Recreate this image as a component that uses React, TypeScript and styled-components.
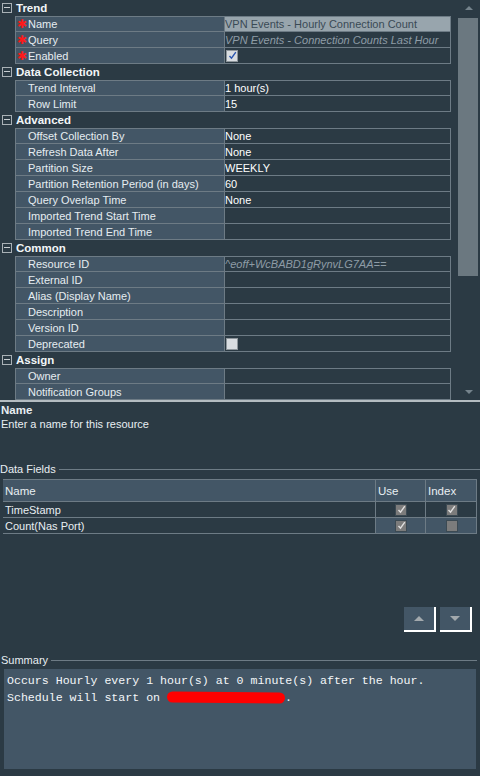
import React from "react";
import styled, { createGlobalStyle } from "styled-components";

const BG = "#2b3a44";
const LIGHT = "#435666";
const LINE = "#6d7b85";

const Global = createGlobalStyle`
  html, body { margin: 0; padding: 0; background: ${BG}; }
  body { font-family: "Liberation Sans", Arial, sans-serif; font-size: 11px; color: #e8eef2; }
  * { box-sizing: border-box; }
`;

const Page = styled.div`
  width: 480px;
  height: 776px;
  display: flex;
  flex-direction: column;
  overflow: hidden;
`;

const GridPanel = styled.div`
  height: 400px;
  display: flex;
  flex-shrink: 0;
  overflow: hidden;
`;

const Grid = styled.div`
  width: 457px;
  display: flex;
  flex-direction: column;
`;

const CategoryRow = styled.div`
  height: 16px;
  display: flex;
  align-items: center;
  font-weight: bold;
  font-size: 11.5px;
  color: #f2f6f8;
`;

const Minus = styled.span`
  width: 10px;
  height: 10px;
  margin: 0 4px 0 2px;
  border: 1px solid #a9b1b6;
  position: relative;
  &::after {
    content: "";
    position: absolute;
    left: 1px;
    right: 1px;
    top: 3px;
    height: 1px;
    background: #c8ced2;
  }
`;

const PropRow = styled.div`
  height: 16px;
  display: grid;
  grid-template-columns: 15px 209px 227px;
`;

const Gutter = styled.div``;

const LabelCell = styled.div<{ $first?: boolean }>`
  background: ${LIGHT};
  border-left: 1px solid ${LINE};
  border-bottom: 1px solid ${LINE};
  border-top: ${(p) => (p.$first ? `1px solid ${LINE}` : "none")};
  display: flex;
  align-items: center;
  padding-left: 1px;
  white-space: nowrap;
  color: #e6edf1;
`;

const Star = styled.span`
  color: #ff1a1a;
  width: 11px;
  font-family: "DejaVu Sans", sans-serif;
  font-size: 12px;
  line-height: 12px;
`;

const LabelText = styled.span<{ $indent?: boolean }>`
  padding-left: ${(p) => (p.$indent ? "11px" : "0")};
`;

const ValueCell = styled.div<{ $first?: boolean; $selected?: boolean; $muted?: boolean }>`
  border-left: 1px solid ${LINE};
  border-right: 1px solid ${LINE};
  border-bottom: 1px solid ${LINE};
  border-top: ${(p) => (p.$first ? `1px solid ${LINE}` : "none")};
  background: ${(p) => (p.$selected ? "#98a5ad" : "transparent")};
  color: ${(p) => (p.$selected ? "#3a4a55" : p.$muted ? "#8e9ca6" : "#ffffff")};
  font-style: ${(p) => (p.$muted ? "italic" : "normal")};
  display: flex;
  align-items: center;
  white-space: nowrap;
  overflow: hidden;
  padding-left: 0;
`;

const CheckBox = styled.span<{ $variant: "light" | "grey" }>`
  width: 12px;
  height: 12px;
  display: inline-flex;
  align-items: center;
  justify-content: center;
  background: ${(p) => (p.$variant === "light" ? "#d9dde1" : "#7c7c7c")};
  border: 1px solid ${(p) => (p.$variant === "light" ? "#8e969c" : "#3c4a53")};
  margin-left: 1px;
`;

const Scrollbar = styled.div`
  width: 23px;
  display: flex;
  flex-direction: column;
  align-items: center;
`;

const ArrowUp = styled.span`
  width: 0;
  height: 0;
  margin-top: 6px;
  border-left: 4px solid transparent;
  border-right: 4px solid transparent;
  border-bottom: 4px solid #75838c;
`;

const ArrowDown = styled.span`
  width: 0;
  height: 0;
  margin-top: auto;
  margin-bottom: 6px;
  border-left: 4px solid transparent;
  border-right: 4px solid transparent;
  border-top: 4px solid #75838c;
`;

const Thumb = styled.div`
  width: 20px;
  height: 258px;
  margin-top: 8px;
  margin-right: 2px;
  align-self: flex-end;
  background: #6b7880;
`;

const Divider = styled.div`
  height: 2px;
  background: #b4bcc1;
  flex-shrink: 0;
`;

const Help = styled.div`
  height: 58px;
  padding: 1px 1px;
  flex-shrink: 0;
`;

const HelpTitle = styled.div`
  font-weight: bold;
  font-size: 11.5px;
  line-height: 14px;
`;

const HelpText = styled.div`
  line-height: 14px;
`;

const Legend = styled.div`
  display: flex;
  align-items: center;
  gap: 3px;
  height: 14px;
  color: #e8eef2;
  &::after {
    content: "";
    flex: 1;
    height: 1px;
    background: ${LINE};
  }
`;

const FieldsLegend = styled(Legend)`
  margin-top: 2px;
`;

const Table = styled.div`
  margin: 3px 3px 0 3px;
  display: flex;
  flex-direction: column;
`;

const TRow = styled.div<{ $header?: boolean }>`
  display: grid;
  grid-template-columns: 373px 50px 51px;
  height: ${(p) => (p.$header ? "23px" : "16px")};
  background: ${(p) => (p.$header ? LIGHT : "transparent")};
  border-bottom: 1px solid ${LINE};
  border-top: ${(p) => (p.$header ? `1px solid ${LINE}` : "none")};
`;

const TCell = styled.div<{ $center?: boolean; $shade?: boolean }>`
  display: flex;
  align-items: center;
  justify-content: ${(p) => (p.$center ? "center" : "flex-start")};
  padding-left: ${(p) => (p.$center ? "0" : "2px")};
  border-right: 1px solid ${LINE};
  background: ${(p) => (p.$shade ? LIGHT : "transparent")};
  white-space: nowrap;
`;

const HeadCell = styled(TCell)`
  font-size: 11.5px;
  padding-left: 2px;
  padding-top: 1px;
`;

const ButtonBar = styled.div`
  margin-top: 73px;
  display: flex;
  justify-content: flex-end;
  gap: 4px;
  padding-right: 8px;
`;

const MoveButton = styled.button`
  width: 32px;
  height: 25px;
  padding: 0;
  background: ${LIGHT};
  border: none;
  border-right: 2px solid #ffffff;
  border-bottom: 2px solid #ffffff;
  display: flex;
  align-items: center;
  justify-content: center;
`;

const TriUp = styled.span`
  border-left: 5px solid transparent;
  border-right: 5px solid transparent;
  border-bottom: 5px solid #a3a9ad;
`;

const TriDown = styled.span`
  border-left: 5px solid transparent;
  border-right: 5px solid transparent;
  border-top: 5px solid #a3a9ad;
`;

const SummarySection = styled.div`
  margin-top: 21px;
  padding: 0 3px 0 1px;
`;

const SummaryBox = styled.div`
  margin: 2px 1px 0 3px;
  height: 100px;
  background: ${LIGHT};
  padding: 3px 3px;
  font-family: "Liberation Mono", "Courier New", monospace;
  font-size: 11.6px;
  line-height: 17px;
  color: #f4f7f9;
`;

const Redact = styled.span`
  display: inline-block;
  width: 118px;
  height: 11px;
  background: #ff0000;
  border-radius: 6px;
  vertical-align: middle;
  transform: rotate(0.5deg);
`;

const Check = ({ color }: { color: string }) => (
  <svg width="9" height="9" viewBox="0 0 9 9">
    <path d="M1.5 5 L3.5 7.2 L7.8 1.2" stroke={color} strokeWidth="1.4" fill="none" />
  </svg>
);

type Prop = {
  label: string;
  value?: React.ReactNode;
  required?: boolean;
  selected?: boolean;
  muted?: boolean;
};

type Cat = { title: string; props: Prop[] };

const categories: Cat[] = [
  {
    title: "Trend",
    props: [
      { label: "Name", value: "VPN Events - Hourly Connection Count", required: true, selected: true },
      { label: "Query", value: "VPN Events - Connection Counts Last Hour", required: true, muted: true },
      {
        label: "Enabled",
        required: true,
        value: (
          <CheckBox $variant="light">
            <Check color="#2a55b0" />
          </CheckBox>
        ),
      },
    ],
  },
  {
    title: "Data Collection",
    props: [
      { label: "Trend Interval", value: "1 hour(s)" },
      { label: "Row Limit", value: "15" },
    ],
  },
  {
    title: "Advanced",
    props: [
      { label: "Offset Collection By", value: "None" },
      { label: "Refresh Data After", value: "None" },
      { label: "Partition Size", value: "WEEKLY" },
      { label: "Partition Retention Period (in days)", value: "60" },
      { label: "Query Overlap Time", value: "None" },
      { label: "Imported Trend Start Time" },
      { label: "Imported Trend End Time" },
    ],
  },
  {
    title: "Common",
    props: [
      { label: "Resource ID", value: "^eoff+WcBABD1gRynvLG7AA==", muted: true },
      { label: "External ID" },
      { label: "Alias (Display Name)" },
      { label: "Description" },
      { label: "Version ID" },
      { label: "Deprecated", value: <CheckBox $variant="light" /> },
    ],
  },
  {
    title: "Assign",
    props: [{ label: "Owner" }, { label: "Notification Groups" }],
  },
];

const fields = [
  { name: "TimeStamp", use: true, index: true },
  { name: "Count(Nas Port)", use: true, index: false },
];

export default function App() {
  return (
    <Page>
      <Global />
      <GridPanel>
        <Grid>
          {categories.map((c) => (
            <React.Fragment key={c.title}>
              <CategoryRow>
                <Minus />
                {c.title}
              </CategoryRow>
              {c.props.map((p, i) => (
                <PropRow key={p.label}>
                  <Gutter />
                  <LabelCell $first={i === 0}>
                    {p.required && <Star>✱</Star>}
                    <LabelText $indent={!p.required}>{p.label}</LabelText>
                  </LabelCell>
                  <ValueCell $first={i === 0} $selected={p.selected} $muted={p.muted}>
                    {p.value}
                  </ValueCell>
                </PropRow>
              ))}
            </React.Fragment>
          ))}
        </Grid>
        <Scrollbar>
          <ArrowUp />
          <Thumb />
          <ArrowDown />
        </Scrollbar>
      </GridPanel>
      <Divider />
      <Help>
        <HelpTitle>Name</HelpTitle>
        <HelpText>Enter a name for this resource</HelpText>
      </Help>
      <FieldsLegend>Data Fields</FieldsLegend>
      <Table>
        <TRow $header>
          <HeadCell>Name</HeadCell>
          <HeadCell>Use</HeadCell>
          <HeadCell>Index</HeadCell>
        </TRow>
        {fields.map((f, i) => (
          <TRow key={f.name}>
            <TCell>{f.name}</TCell>
            <TCell $center $shade={i === 1}>
              <CheckBox $variant="grey">{f.use && <Check color="#e0e0e0" />}</CheckBox>
            </TCell>
            <TCell $center $shade={i === 1}>
              <CheckBox $variant="grey">{f.index && <Check color="#e0e0e0" />}</CheckBox>
            </TCell>
          </TRow>
        ))}
      </Table>
      <ButtonBar>
        <MoveButton aria-label="Move up">
          <TriUp />
        </MoveButton>
        <MoveButton aria-label="Move down">
          <TriDown />
        </MoveButton>
      </ButtonBar>
      <SummarySection>
        <Legend>Summary</Legend>
        <SummaryBox>
          <div>Occurs Hourly every 1 hour(s) at 0 minute(s) after the hour.</div>
          <div>
            Schedule will start on <Redact />.
          </div>
        </SummaryBox>
      </SummarySection>
    </Page>
  );
}
